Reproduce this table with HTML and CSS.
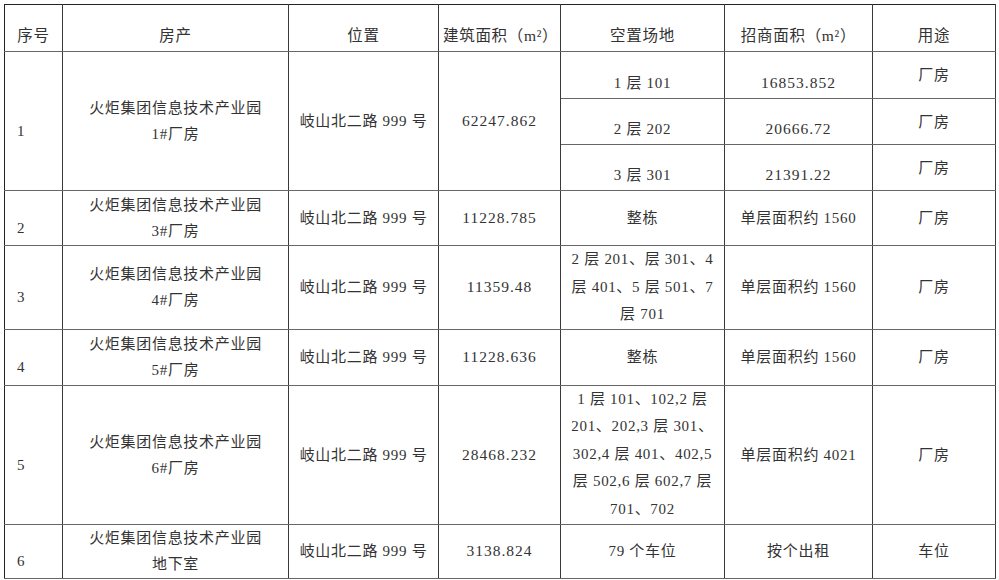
FILE: index.html
```html
<!DOCTYPE html>
<html lang="zh">
<head>
<meta charset="utf-8">
<title>空置场地</title>
<link rel="stylesheet" href="styles.css">
</head>
<body>
<table class="sheet">
  <colgroup>
    <col class="c1"><col class="c2"><col class="c3"><col class="c4"><col class="c5"><col class="c6"><col class="c7">
  </colgroup>
  <thead>
    <tr class="r-head">
      <th>序号</th><th>房产</th><th>位置</th><th>建筑面积（m²）</th><th>空置场地</th><th>招商面积（m²）</th><th>用途</th>
    </tr>
  </thead>
  <tbody>
    <tr class="r-1a">
      <td rowspan="3" class="idx">1</td>
      <td rowspan="3">火炬集团信息技术产业园<br>1#厂房</td>
      <td rowspan="3">岐山北二路 999 号</td>
      <td rowspan="3" class="num">62247.862</td>
      <td class="low">1 层 101</td>
      <td class="low num">16853.852</td>
      <td>厂房</td>
    </tr>
    <tr class="r-1b">
      <td class="low">2 层 202</td>
      <td class="low num">20666.72</td>
      <td>厂房</td>
    </tr>
    <tr class="r-1c">
      <td class="low">3 层 301</td>
      <td class="low num">21391.22</td>
      <td>厂房</td>
    </tr>
    <tr class="r-2">
      <td class="idx">2</td>
      <td>火炬集团信息技术产业园<br>3#厂房</td>
      <td>岐山北二路 999 号</td>
      <td class="num">11228.785</td>
      <td>整栋</td>
      <td>单层面积约 1560</td>
      <td>厂房</td>
    </tr>
    <tr class="r-3">
      <td class="idx">3</td>
      <td>火炬集团信息技术产业园<br>4#厂房</td>
      <td>岐山北二路 999 号</td>
      <td class="num">11359.48</td>
      <td class="multi">2 层 201、层 301、4<br>层 401、5 层 501、7<br>层 701</td>
      <td>单层面积约 1560</td>
      <td>厂房</td>
    </tr>
    <tr class="r-4">
      <td class="idx">4</td>
      <td>火炬集团信息技术产业园<br>5#厂房</td>
      <td>岐山北二路 999 号</td>
      <td class="num">11228.636</td>
      <td>整栋</td>
      <td>单层面积约 1560</td>
      <td>厂房</td>
    </tr>
    <tr class="r-5">
      <td class="idx">5</td>
      <td>火炬集团信息技术产业园<br>6#厂房</td>
      <td>岐山北二路 999 号</td>
      <td class="num">28468.232</td>
      <td class="multi">1 层 101、102,2 层<br>201、202,3 层 301、<br>302,4 层 401、402,5<br>层 502,6 层 602,7 层<br>701、702</td>
      <td>单层面积约 4021</td>
      <td>厂房</td>
    </tr>
    <tr class="r-6">
      <td class="idx">6</td>
      <td>火炬集团信息技术产业园<br>地下室</td>
      <td>岐山北二路 999 号</td>
      <td class="num">3138.824</td>
      <td>79 个车位</td>
      <td>按个出租</td>
      <td>车位</td>
    </tr>
  </tbody>
</table>
</body>
</html>
```

FILE: styles.css
```css
html, body {
  margin: 0;
  padding: 0;
  background: #ffffff;
}
body {
  padding: 4px 0 0 4px;
  font-family: "Liberation Serif", "Noto Sans CJK SC", serif;
  font-size: 15px;
  color: #333333;
}
.sheet {
  border-collapse: collapse;
  table-layout: fixed;
  width: 991px;
}
.c1 { width: 58px; }
.c2 { width: 226px; }
.c3 { width: 150px; }
.c4 { width: 122px; }
.c5 { width: 164px; }
.c6 { width: 148px; }
.c7 { width: 123px; }

.sheet th,
.sheet td {
  border-left: 1px solid #3a3a3a;
  border-right: 1px solid #3a3a3a;
  border-top: 1px solid #666666;
  border-bottom: 1px solid #666666;
  padding: 0 4px;
  text-align: center;
  vertical-align: middle;
  line-height: 26px;
  letter-spacing: 0.7px;
  font-weight: normal;
  white-space: nowrap;
  overflow: hidden;
}
.sheet th {
  border-top: 1px solid #222222;
  padding-top: 15px;
  font-size: 15.5px;
}
.sheet tr > :first-child {
  border-left: 1px solid #222222;
}
.sheet td.num {
  font-size: 15.5px;
  letter-spacing: 1px;
}
.sheet td.multi {
  line-height: 27.5px;
}
.sheet td.idx {
  text-align: left;
  padding-left: 12px;
  padding-top: 20px;
}
.sheet td.low {
  padding-top: 15px;
}
.r-head { height: 47px; }
.r-1a { height: 47px; }
.r-1b { height: 46px; }
.r-1c { height: 46px; }
.r-2 { height: 55px; }
.r-3 { height: 83px; }
.r-4 { height: 56px; }
.r-5 { height: 139px; }
.r-6 { height: 54px; }
```
